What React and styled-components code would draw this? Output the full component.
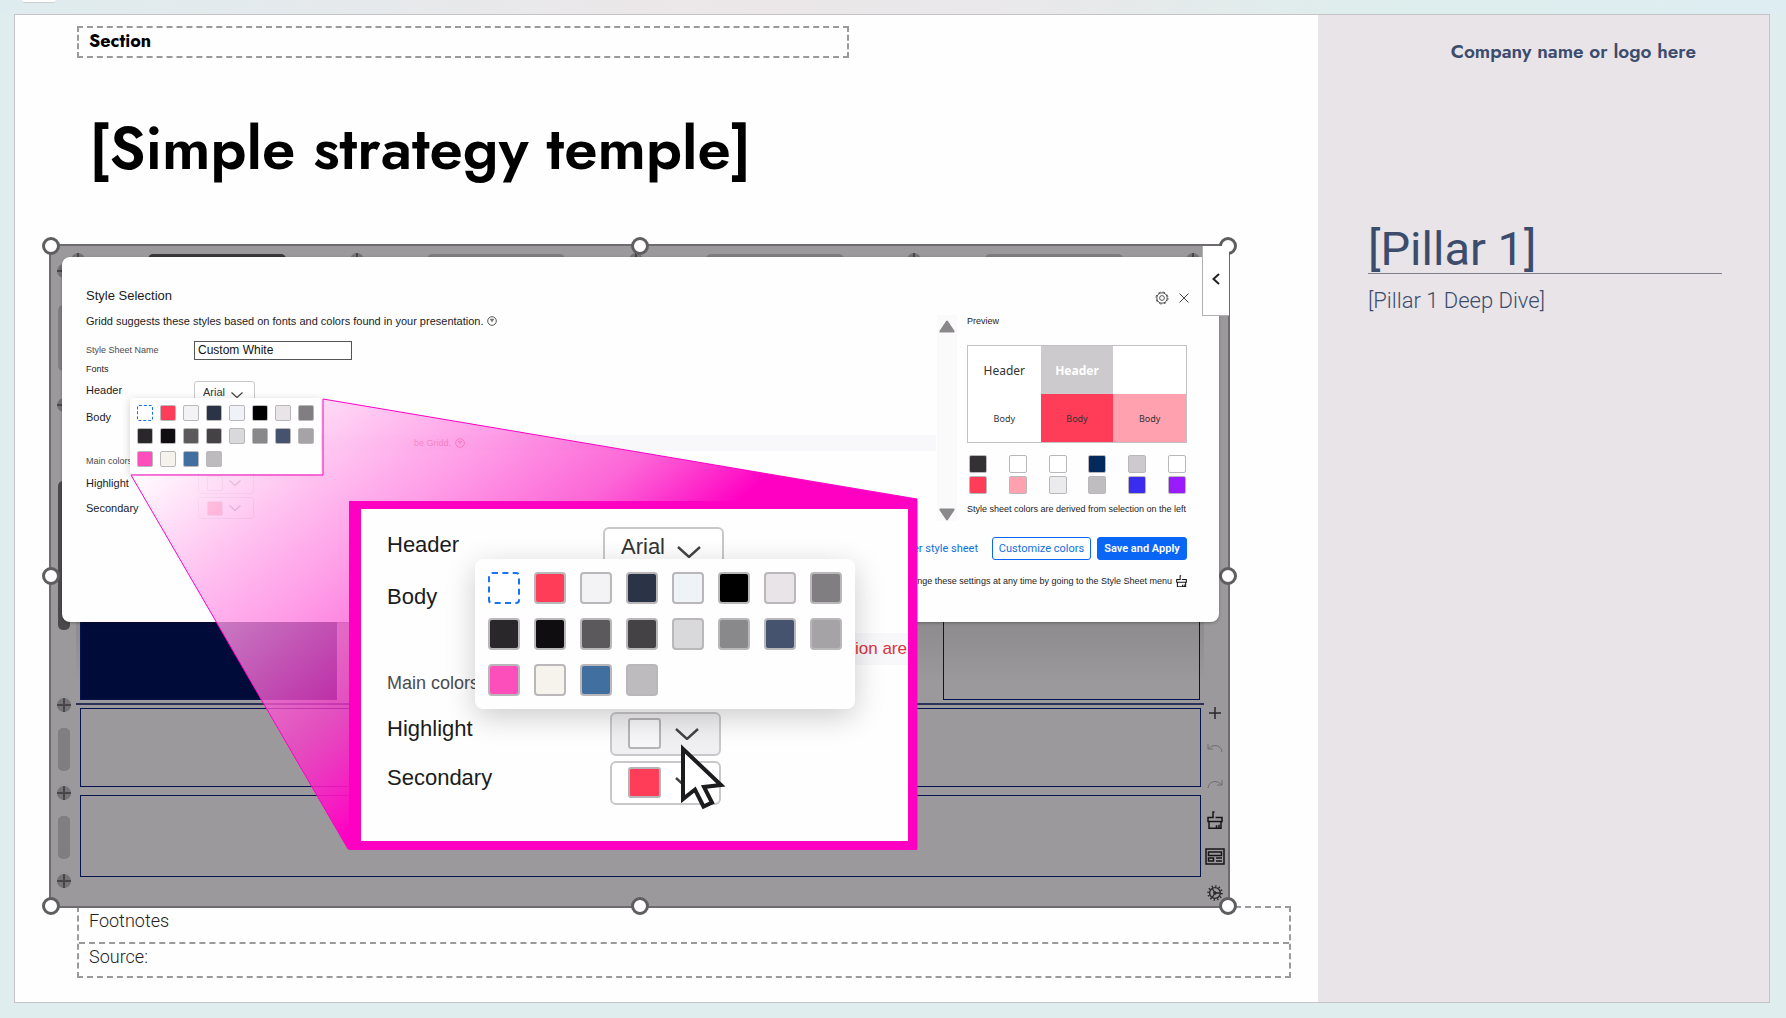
import React from "react";
import styled, { createGlobalStyle } from "styled-components";

const GlobalStyle = createGlobalStyle`
    * {
        box-sizing: border-box;
    }
    body {
        margin: 0;
        background: #e0edee;
        font-family: "Liberation Sans", Arial, sans-serif;
        color: #1b1b1d;
    }
    h1, h2, h3, p {
        margin: 0;
        font-weight: 400;
    }
    button, input, select {
        font-family: inherit;
        margin: 0;
    }
`;

const Page = styled.div`
    display: flex;
    flex-direction: column;
    min-height: 100vh;
    padding: 0 16px 15px 14px;
    background: linear-gradient(90deg, #dfecef 0%, #ece7e9 38%, #e9e8ea 58%, #deeeed 78%, #deedf2 100%) top / 100% 14px no-repeat, #e0edee;
`;

const TopStrip = styled.div`
    height: 14px;
    padding-left: 8px;
`;

const TabStub = styled.div`
    width: 34px;
    height: 3px;
    background: #fff;
    border-bottom: 1px solid #cfcfd2;
    border-radius: 0 0 6px 6px;
`;

const Slide = styled.main`
    flex: 1;
    display: grid;
    grid-template-columns: minmax(0, 1fr) 451px;
    border: 1px solid #c6c3c7;
    background: #fefefe;
`;

const Content = styled.section`
    padding: 11px 27px 20px 34px;
`;

const SectionBox = styled.div`
    width: 772px;
    margin-left: 28px;
    padding: 0 10px;
    border: 2px dashed #9b999b;
    font: 700 18px/26px Jost, Lato, sans-serif;
    height: 32px;
    color: #000;
`;

const Title = styled.h1`
    margin: 55px 0 59px 40px;
    font: 600 60px/72px Jost, Lato, sans-serif;
    color: #000;
`;

const Side = styled.aside`
    padding: 25px 47px 0 50px;
    background: #e8e4e8;
    color: #3c4c6c;
`;

const Company = styled.p`
    padding-right: 26px;
    text-align: right;
    font: 600 19px/24px Jost, Lato, sans-serif;
`;

const Pillar = styled.h2`
    height: 57px;
    margin-top: 153px;
    border-bottom: 1px solid #80808c;
    font: 400 47px/64px Roboto, sans-serif;
`;

const PillarNote = styled.p`
    margin-top: 13px;
    font: 300 22px/28px Roboto, sans-serif;
`;

const Notes = styled.div`
    margin: -2px 0 0 28px;
    border: 2px dashed #9b999b;
    font: 300 18px/28px Roboto, sans-serif;
    color: #222;
    div {
        height: 34px;
        padding-left: 10px;
        line-height: 26px;
    }
    div + div {
        border-top: 2px dashed #9b999b;
    }
`;

/* selected picture on the slide */

const Frame = styled.div`
    position: relative;
    z-index: 1;
    margin-right: 61px;
    display: grid;
    grid-template-columns: 25px minmax(0, 1fr) 24px;
    border: 2px solid #6d6b6e;
    background: #9b999b;
`;

const Handle = styled.span`
    position: absolute;
    left: ${(p) => p.$x};
    top: ${(p) => p.$y};
    width: 18px;
    height: 18px;
    transform: translate(-50%, -50%);
    border: 3px solid #5f5d60;
    border-radius: 50%;
    background: #fff;
`;

const Rail = styled.div`
    display: grid;
    grid-template-rows: 34px 100px 34px 266px 34px 54px 34px 54px 34px;
    place-items: center;
    padding: 8px 0 8px;
`;

const Pill = styled.span`
    width: 12px;
    height: ${(p) => p.$h}px;
    border-radius: 5px;
    background: ${(p) => (p.$dark ? "#4b494c" : "#807e80")};
`;

const TopRail = styled.div`
    display: flex;
    align-items: center;
    justify-content: space-between;
    height: 18px;
    margin: 5px 4px 0 -5px;
    span {
        width: 138px;
        height: 12px;
        border-radius: 5px;
        background: #7f7d7f;
    }
    span:nth-of-type(1) {
        background: #39373a;
    }
`;

const Boxes = styled.div`
    display: flex;
    flex-direction: column;
    padding-bottom: 29px;
`;

const Pillars = styled.div`
    flex: 1;
    display: flex;
    justify-content: space-between;
    padding: 0 4px;
    margin-bottom: 3px;
    background: linear-gradient(#9b999b 80%, #8b898b 80%, #9b999b 96%);
`;

const Column = styled.div`
    width: 257px;
    border: 1px solid #04124d;
    background: ${(p) => (p.$filled ? "#010b3a" : "transparent")};
`;

const Line = styled.div`
    height: 2px;
    margin-bottom: 3px;
    background: #2a3258;
`;

const Box = styled.div`
    height: ${(p) => p.$h}px;
    margin: 0 3px ${(p) => p.$gap || 0}px 4px;
    border: 1px solid #04124d;
`;

const Tools = styled.div`
    display: flex;
    flex-direction: column;
    align-items: center;
    justify-content: flex-end;
    gap: 15px;
    padding: 0 2px 3px 0;
    button {
        height: 21px;
        padding: 0;
        border: 0;
        background: none;
        line-height: 0;
    }
`;

const Collapse = styled.button`
    position: absolute;
    top: 0;
    right: -1px;
    z-index: 2;
    width: 27px;
    height: 70px;
    padding: 0;
    border: solid #b3b1b4;
    border-width: 0 0 1px 1px;
    background: #fff;
`;

/* style sheet dialog */

const Dialog = styled.div`
    position: absolute;
    inset: 11px 9px auto 11px;
    padding: 27px 32px 34px 24px;
    border-radius: 8px;
    background: #fefefe;
    box-shadow: 0 1px 3px rgba(0, 0, 0, 0.3);
`;

const DialogHead = styled.div`
    display: flex;
    justify-content: space-between;
    align-items: center;
    height: 22px;
    h2 {
        font-size: 13px;
    }
    div {
        display: flex;
        gap: 8px;
        margin-right: -4px;
        padding-top: 6px;
    }
    button {
        padding: 0;
        border: 0;
        background: none;
        line-height: 0;
    }
`;

const DialogBody = styled.div`
    display: grid;
    grid-template-columns: minmax(0, 1fr) 20px 220px;
    column-gap: 10px;
`;

const Intro = styled.p`
    display: flex;
    align-items: center;
    gap: 4px;
    height: 30px;
    margin-bottom: 4px;
    font-size: 11px;
    white-space: nowrap;
`;

const Form = styled.div`
    position: relative;
`;

const Row = styled.div`
    display: grid;
    grid-template-columns: ${(p) => (p.$big ? 216 : 108)}px 1fr;
    align-items: center;
    height: ${(p) => p.$h}px;
    margin-top: ${(p) => p.$top || 0}px;
`;

const Label = styled.label`
    font-size: ${(p) => p.$size || 11}px;
    color: ${(p) => (p.$soft ? "#4c4a4d" : "#1b1b1d")};
    padding-bottom: ${(p) => p.$lift || 0}px;
`;

const NameInput = styled.input`
    width: 158px;
    height: 19px;
    padding: 0 3px;
    border: 1px solid #555;
    background: #fff;
    font-size: 12px;
    color: #111;
`;

const SelectWrap = styled.div`
    position: relative;
    width: ${(p) => (p.$big ? 121 : 61)}px;
    select {
        appearance: none;
        width: 100%;
        height: ${(p) => (p.$big ? 38 : 22)}px;
        padding: 0 0 0 ${(p) => (p.$big ? 16 : 8)}px;
        border: ${(p) => (p.$big ? 2 : 1)}px solid #c9c7ca;
        border-radius: ${(p) => (p.$big ? 6 : 3)}px;
        background: #fff;
        font-size: ${(p) => (p.$big ? 22 : 11)}px;
        color: #333;
    }
    svg {
        position: absolute;
        right: ${(p) => (p.$big ? 23 : 12)}px;
        top: 50%;
        pointer-events: none;
    }
`;

const ColorButton = styled.button`
    display: flex;
    align-items: center;
    gap: ${(p) => (p.$big ? 14 : 6)}px;
    width: ${(p) => (p.$big ? 111 : 56)}px;
    height: ${(p) => (p.$big ? 44 : 22)}px;
    margin-left: ${(p) => (p.$big ? 7 : 4)}px;
    padding: 0 0 0 ${(p) => (p.$big ? 16 : 8)}px;
    border: ${(p) => (p.$big ? 2 : 1)}px solid #c9c7ca;
    border-radius: ${(p) => (p.$big ? 6 : 3)}px;
    background: ${(p) => (p.$active ? "#f0eff1" : "#fff")};
    span {
        width: ${(p) => (p.$big ? 33 : 16)}px;
        height: ${(p) => (p.$big ? 31 : 15)}px;
        border: ${(p) => (p.$big ? 2 : 1)}px solid #b5b3b6;
        border-radius: ${(p) => (p.$big ? 3 : 2)}px;
        background: ${(p) => p.$color};
    }
`;

const Warning = styled.div`
    display: flex;
    align-items: center;
    gap: 4px;
    white-space: nowrap;
    height: ${(p) => (p.$big ? 32 : 16)}px;
    margin: ${(p) => (p.$big ? "10px 0 0 114px" : "5px -9px 0 50px")};
    padding-left: ${(p) => (p.$big ? 354 : 278)}px;
    background: #f8f7f9;
    font-size: ${(p) => (p.$big ? 17 : 9)}px;
    color: #d9343f;
`;

const Palette = styled.div`
    position: absolute;
    left: ${(p) => (p.$big ? 114 : 44)}px;
    top: ${(p) => (p.$big ? 50 : 58)}px;
    display: grid;
    grid-template-columns: repeat(8, ${(p) => (p.$big ? 32 : 16)}px);
    gap: ${(p) => (p.$big ? 14 : 7)}px;
    padding: ${(p) => (p.$big ? 13 : 7)}px;
    border-radius: ${(p) => (p.$big ? 8 : 3)}px;
    background: #fefefe;
    box-shadow: 0 ${(p) => (p.$big ? "8px 30px" : "2px 8px")} rgba(0, 0, 0, 0.2);
    button {
        height: ${(p) => (p.$big ? 32 : 16)}px;
    }
`;

const Swatch = styled.button`
    padding: 0;
    height: 18px;
    border-radius: ${(p) => (p.$big ? 4 : 2)}px;
    border: ${(p) => (p.$big ? 2 : 1)}px ${(p) => (p.$empty ? "dashed #1a73f0" : "solid #b9b7ba")};
    background: ${(p) => p.$color};
`;

const Scroller = styled.div`
    display: flex;
    flex-direction: column;
    align-items: center;
    justify-content: space-between;
    height: 206px;
    margin-top: 9px;
    padding: 5px 0 0;
    background: #fbfafb;
    svg {
        display: block;
    }
`;

const PreviewTitle = styled.h3`
    font-size: 9px;
    line-height: 30px;
    margin-bottom: 9px;
`;

const PreviewGrid = styled.div`
    display: grid;
    grid-template-columns: repeat(3, 1fr);
    grid-auto-rows: 48px;
    border: 1px solid #c3c1c4;
    div {
        display: flex;
        align-items: center;
        justify-content: center;
    }
`;

const PreviewCell = styled.div`
    background: ${(p) => p.$bg};
    color: ${(p) => p.$color || "#333"};
    font: ${(p) => (p.$head ? (p.$bold ? "700 12px" : "400 12px") : "400 9px")} "Noto Sans", sans-serif;
`;

const SheetColors = styled.div`
    display: grid;
    grid-template-columns: repeat(6, 18px);
    justify-content: space-between;
    row-gap: 3px;
    margin: 12px 0 8px;
    padding: 0 1px 0 2px;
`;

const SmallNote = styled.p`
    font-size: 9px;
    line-height: 14px;
    white-space: nowrap;
`;

const DialogFoot = styled.div`
    display: flex;
    justify-content: flex-end;
    align-items: center;
    gap: 6px;
    margin: 16px 0 14px;
    font: 11px Roboto, sans-serif;
    a {
        margin-right: 8px;
        color: #0f6fe0;
        text-decoration: none;
    }
`;

const Action = styled.button`
    height: 23px;
    padding: 0;
    width: ${(p) => (p.$primary ? 90 : 99)}px;
    border: 1px solid #0a66f5;
    border-radius: 3px;
    background: ${(p) => (p.$primary ? "#0a66f5" : "#fff")};
    color: ${(p) => (p.$primary ? "#fff" : "#0f6fe0")};
    font-size: 11px;
    font-weight: ${(p) => (p.$primary ? 600 : 400)};
`;

const FootNote = styled(SmallNote)`
    display: flex;
    justify-content: flex-end;
    align-items: center;
    gap: 4px;
    height: 14px;
`;

/* magnified callout */

const Funnel = styled.svg`
    position: absolute;
    left: 0;
    top: 0;
    overflow: visible;
    pointer-events: none;
`;

const Callout = styled.div`
    position: absolute;
    left: 298px;
    top: 255px;
    width: 568px;
    padding: 12px 0 34px 26px;
    border: solid #ff00c3;
    border-width: 8px 9px 9px 12px;
    background: #fefefe;
    > svg {
        position: absolute;
        left: 318px;
        top: 234px;
    }
`;

const paletteColors = [
    "#ffffff", "#ff3d58", "#f3f2f4", "#2b3447", "#eff3f8", "#000000", "#e8e4e8", "#807e81",
    "#29272a", "#0f0d10", "#5b595c", "#444245", "#d9d8db", "#89888b", "#46536f", "#a5a3a6",
    "#fc4fbb", "#f6f2ec", "#416f9f", "#bdbbbe",
];

const sheetColors = [
    "#333134", "#ffffff", "#ffffff", "#032a5b", "#cccacd", "#ffffff",
    "#ff3d58", "#ffa1ae", "#ebeaec", "#bfbdc0", "#3b2df0", "#9b1bff",
];

const Circle = () => (
    <svg width="14" height="14" viewBox="0 0 14 14">
        <circle cx="7" cy="7" r="7" fill="#757375" />
        <path d="M7 0v14M0 7h14" stroke="#48464a" strokeWidth="2" />
    </svg>
);

const Chevron = ({ size }) => (
    <svg width={size} height={size / 2} viewBox="0 0 24 12" fill="none" stroke="#444" strokeWidth="2.4">
        <path d="M1 1l11 10L23 1" />
    </svg>
);

const HelpIcon = ({ color = "#555" }) => (
    <svg width="10" height="10" viewBox="0 0 10 10" fill="none" stroke={color}>
        <circle cx="5" cy="5" r="4.3" />
        <path d="M3.5 3.3h3L5 5.6z" />
    </svg>
);

const BrushIcon = ({ size = 16 }) => (
    <svg width={size} height={size * 1.15} viewBox="0 0 16 18" fill="none" stroke="#161418" strokeWidth="1.5">
        <path d="M7.5 0.8H6v5.4H1v4h14v-4H8.5M2 10.2V17h12v-6.8M7 17h2.5v-3M12 17v-3.5" />
    </svg>
);

const CogIcon = ({ size = 16 }) => (
    <svg width={size} height={size} viewBox="0 0 16 16" fill="none" stroke="#2b292c">
        <circle cx="8" cy="8" r="5.4" strokeWidth="1.4" />
        <circle cx="8" cy="8" r="6.8" strokeWidth="2" strokeDasharray="1.3 2.26" />
        <path d="M8 8h5M8 8L5.3 3.6M8 8l-2.7 4.4" strokeWidth="1.3" />
        <circle cx="8" cy="8" r="1.3" fill="#2b292c" />
    </svg>
);

const ColorPalette = ({ big }) => (
    <Palette $big={big} role="group" aria-label="Suggested colors">
        {paletteColors.map((color, i) => (
            <Swatch key={color} $big={big} $color={color} $empty={i === 0} aria-label={color} />
        ))}
    </Palette>
);

const FontSelect = ({ id, big }) => (
    <SelectWrap $big={big}>
        <select id={id} defaultValue="Arial">
            <option>Arial</option>
        </select>
        <Chevron size={big ? 24 : 12} />
    </SelectWrap>
);

const StyleForm = () => (
    <Form>
        <Row $h={20}>
            <Label $size={9} $soft htmlFor="sheet-name">Style Sheet Name</Label>
            <NameInput id="sheet-name" defaultValue="Custom White" />
        </Row>
        <Row $h={18}>
            <Label as="span" $size={9}>Fonts</Label>
        </Row>
        <Row $h={28}>
            <Label htmlFor="header-font" $lift={4}>Header</Label>
            <FontSelect id="header-font" />
        </Row>
        <Row $h={24}>
            <Label as="span" $lift={2}>Body</Label>
        </Row>
        <Warning>
            be Gridd. <HelpIcon color="#d9343f" />
        </Warning>
        <Row $h={20}>
            <Label as="span" $size={9} $soft>Main colors</Label>
        </Row>
        <Row $h={24}>
            <Label htmlFor="highlight">Highlight</Label>
            <ColorButton id="highlight" $color="#fff">
                <span />
                <Chevron size={12} />
            </ColorButton>
        </Row>
        <Row $h={26}>
            <Label htmlFor="secondary">Secondary</Label>
            <ColorButton id="secondary" $color="#ff3d58">
                <span />
                <Chevron size={12} />
            </ColorButton>
        </Row>
        <ColorPalette />
    </Form>
);

const Preview = () => (
    <div>
        <PreviewTitle>Preview</PreviewTitle>
        <PreviewGrid>
            <PreviewCell $head $bg="#fff">Header</PreviewCell>
            <PreviewCell $head $bold $bg="#cccacd" $color="#fff">Header</PreviewCell>
            <PreviewCell $bg="#fff" />
            <PreviewCell $bg="#fff">Body</PreviewCell>
            <PreviewCell $bg="#ff3d58">Body</PreviewCell>
            <PreviewCell $bg="#ffa1ae">Body</PreviewCell>
        </PreviewGrid>
        <SheetColors>
            {sheetColors.map((color, i) => (
                <Swatch key={i} $color={color} aria-label={color} />
            ))}
        </SheetColors>
        <SmallNote>Style sheet colors are derived from selection on the left</SmallNote>
    </div>
);

const StyleDialog = () => (
    <Dialog role="dialog" aria-label="Style Selection">
        <DialogHead>
            <h2>Style Selection</h2>
            <div>
                <button aria-label="Settings">
                    <svg width="14" height="14" viewBox="0 0 14 14" fill="none" stroke="#555">
                        <circle cx="7" cy="7" r="5.2" />
                        <circle cx="7" cy="7" r="6" strokeDasharray="2.6 2.1" />
                        <circle cx="7" cy="7" r="2.4" />
                    </svg>
                </button>
                <button aria-label="Close">
                    <svg width="14" height="14" viewBox="0 0 14 14" stroke="#444">
                        <path d="M2.5 2.5l9 9M11.5 2.5l-9 9" />
                    </svg>
                </button>
            </div>
        </DialogHead>
        <DialogBody>
            <div>
                <Intro>
                    Gridd suggests these styles based on fonts and colors found in your presentation. <HelpIcon />
                </Intro>
                <StyleForm />
            </div>
            <Scroller>
                <svg width="16" height="13" viewBox="0 0 16 13">
                    <path d="M7 1.2Q8 0 9 1.2L15.6 11Q16 12.5 14.5 12.5H1.5Q0 12.5 .4 11z" fill="#8a888b" />
                </svg>
                <svg width="16" height="13" viewBox="0 0 16 13">
                    <path d="M7 11.8Q8 13 9 11.8L15.6 2Q16 .5 14.5 .5H1.5Q0 .5 .4 2z" fill="#8a888b" />
                </svg>
            </Scroller>
            <Preview />
        </DialogBody>
        <DialogFoot>
            <a href="#sheets">Select another style sheet</a>
            <Action>Customize colors</Action>
            <Action $primary>Save and Apply</Action>
        </DialogFoot>
        <FootNote>
            You can change these settings at any time by going to the Style Sheet menu <BrushIcon size={11} />
        </FootNote>
    </Dialog>
);

const Magnified = () => (
    <Callout>
        <Row $big $h={50}>
            <Label $size={22} htmlFor="big-header" $lift={2}>Header</Label>
            <FontSelect big id="big-header" />
        </Row>
        <Row $big $h={52}>
            <Label as="span" $size={22}>Body</Label>
        </Row>
        <Warning $big>ion are</Warning>
        <Row $big $h={36}>
            <Label as="span" $size={18} $soft>Main colors</Label>
        </Row>
        <Row $big $h={49} $top={8}>
            <Label $size={22} $lift={10} htmlFor="big-highlight">Highlight</Label>
            <ColorButton $big $active id="big-highlight" $color="#f7f6f8">
                <span />
                <Chevron size={24} />
            </ColorButton>
        </Row>
        <Row $big $h={49}>
            <Label $size={22} $lift={10} htmlFor="big-secondary">Secondary</Label>
            <ColorButton $big id="big-secondary" $color="#ff3d58">
                <span />
                <Chevron size={24} />
            </ColorButton>
        </Row>
        <ColorPalette big />
        <svg width="50" height="70" viewBox="0 0 50 70" fill="#fff" stroke="#1c1b1e" strokeWidth="4">
            <path d="M4 6v50l12-9.5 8.5 17 8.5-4-8-15.5 17-2z" />
        </svg>
    </Callout>
);

const ToolRail = () => (
    <Tools>
        <button aria-label="Add">
            <svg width="14" height="14" viewBox="0 0 14 14" stroke="#2b292c" strokeWidth="1.5">
                <path d="M7 1v12M1 7h12" />
            </svg>
        </button>
        <button aria-label="Undo">
            <svg width="16" height="12" viewBox="0 0 16 12" fill="none" stroke="#6f6d70">
                <path d="M1 1v5h5M1 6C5 1 14 1 15 9" />
            </svg>
        </button>
        <button aria-label="Redo">
            <svg width="16" height="12" viewBox="0 0 16 12" fill="none" stroke="#6f6d70">
                <path d="M15 1v5h-5M15 6C11 1 2 1 1 9" />
            </svg>
        </button>
        <button aria-label="Style sheet">
            <BrushIcon />
        </button>
        <button aria-label="Layouts">
            <svg width="20" height="17" viewBox="0 0 20 17" fill="none" stroke="#161418" strokeWidth="1.5">
                <path d="M1 1h18v15H1zM3.5 4h13v3.5h-13zM3.5 10h5v3h-5zM11 10h6M11 13h6" />
            </svg>
        </button>
        <button aria-label="Options">
            <CogIcon />
        </button>
    </Tools>
);

const SelectedPicture = () => (
    <Frame>
        <Rail>
            <Circle />
            <Pill $h={66} />
            <Circle />
            <Pill $h={149} $dark />
            <Circle />
            <Pill $h={43} />
            <Circle />
            <Pill $h={43} />
            <Circle />
        </Rail>
        <Boxes>
            <TopRail>
                <Circle /><span /><Circle /><span /><Circle /><span /><Circle /><span /><Circle />
            </TopRail>
            <Pillars>
                <Column $filled />
                <Column />
            </Pillars>
            <Line />
            <Box $h={79} $gap={8} />
            <Box $h={82} />
        </Boxes>
        <ToolRail />
        {["0", "50%", "100%"].map((x) =>
            ["0", "50%", "100%"].map((y) =>
                x === "50%" && y === "50%" ? null : <Handle key={x + y} $x={x} $y={y} />
            )
        )}
        <StyleDialog />
        <Collapse aria-label="Collapse">
            <svg width="8" height="12" viewBox="0 0 8 12" fill="none" stroke="#222" strokeWidth="2">
                <path d="M7 1L1.5 6 7 11" />
            </svg>
        </Collapse>
        <Funnel width="10" height="10">
            <defs>
                <linearGradient id="beam" gradientUnits="userSpaceOnUse" x1="80" y1="229" x2="350" y2="544">
                    <stop offset="0" stopColor="#fff" stopOpacity="0.9" />
                    <stop offset="0.49" stopColor="#ff82e1" stopOpacity="0.77" />
                    <stop offset="0.76" stopColor="#fb35ca" stopOpacity="0.75" />
                    <stop offset="1" stopColor="#ff00c3" />
                </linearGradient>
            </defs>
            <path d="M272 153L866 253V603H297L80 229H272z" fill="url(#beam)" stroke="#ff00c3" />
        </Funnel>
        <Magnified />
    </Frame>
);

const App = () => {
    return (
        <Page>
            <GlobalStyle />
            <TopStrip>
                <TabStub />
            </TopStrip>
            <Slide>
                <Content>
                    <SectionBox>Section</SectionBox>
                    <Title>[Simple strategy temple]</Title>
                    <SelectedPicture />
                    <Notes>
                        <div>Footnotes</div>
                        <div>Source:</div>
                    </Notes>
                </Content>
                <Side>
                    <Company>Company name or logo here</Company>
                    <Pillar>[Pillar 1]</Pillar>
                    <PillarNote>[Pillar 1 Deep Dive]</PillarNote>
                </Side>
            </Slide>
        </Page>
    );
};

export default App;
